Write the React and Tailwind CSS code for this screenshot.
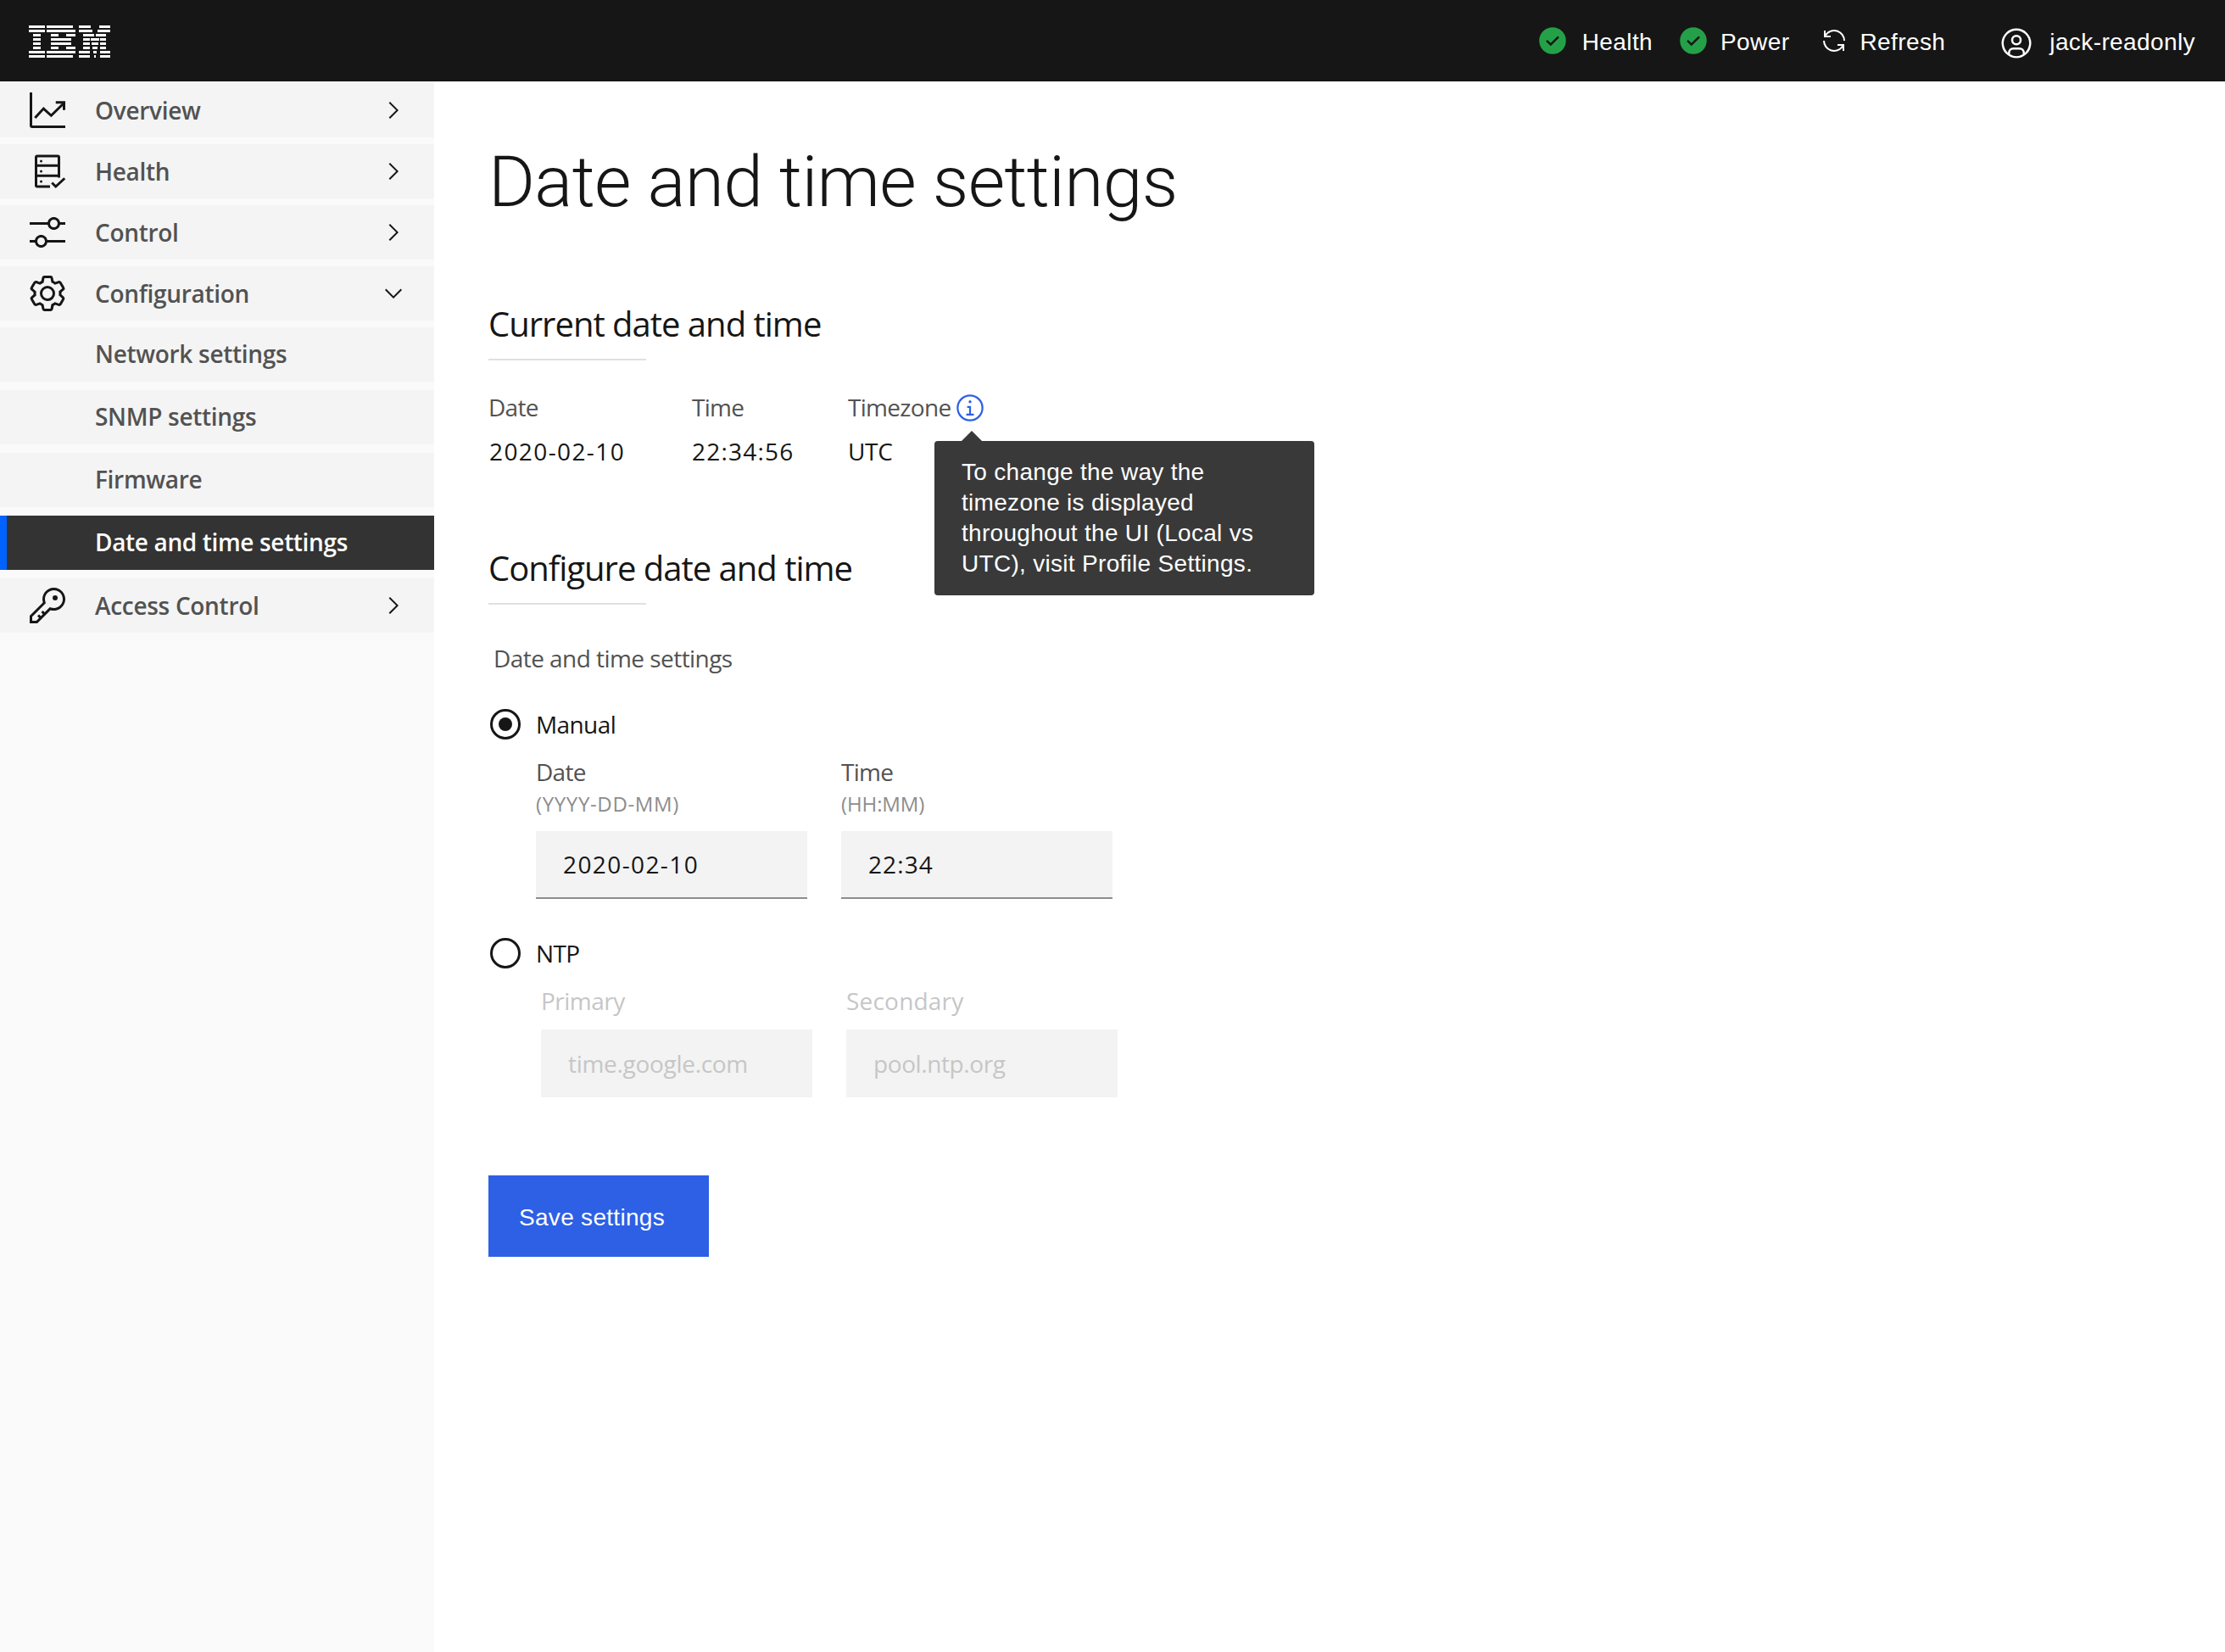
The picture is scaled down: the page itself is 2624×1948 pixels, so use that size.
import React from "react";

const logoRows = [
  [[0,19],[21,52],[59,73],[83,96]],
  [[0,19],[21,55],[59,75],[81,96]],
  [[5,14],[26,35],[44,55],[64,77],[79,91]],
  [[5,14],[26,50],[64,72],[73,83],[84,91]],
  [[5,14],[26,50],[64,72],[74,82],[84,91]],
  [[5,14],[26,35],[44,55],[64,72],[75,81],[84,91]],
  [[0,19],[21,55],[59,72],[76,80],[84,96]],
  [[0,19],[21,52],[59,72],[77,79],[84,96]],
];

function IbmLogo() {
  return (
    <svg width="96" height="38" viewBox="0 0 96 38" className="mt-[2px] block" fill="#ffffff" aria-label="IBM">
      {logoRows.map((spans, i) =>
        spans.map(([a, b], j) => <rect key={i + "-" + j} x={a} y={i * 5} width={b - a} height="3" />)
      )}
    </svg>
  );
}

function CheckFilled() {
  return (
    <svg width="36" height="36" viewBox="0 0 32 32" className="block shrink-0">
      <circle cx="16" cy="16" r="10" fill="#161616" />
      <path fill="#24a148" d="M16 2a14 14 0 1 0 14 14A14 14 0 0 0 16 2zm-2 19.59l-5-5L10.59 15 14 18.41 21.41 11l1.6 1.59z" />
    </svg>
  );
}

function Renew() {
  return (
    <svg width="32" height="32" viewBox="0 0 32 32" fill="#ffffff" className="block shrink-0">
      <path d="M12 10H6.78A11 11 0 0 1 27 16h2A13 13 0 0 0 6 7.68V4H4v8h8zM20 22h5.22A11 11 0 0 1 5 16H3a13 13 0 0 0 23 8.32V28h2v-8h-8z" />
    </svg>
  );
}

function UserAvatar() {
  return (
    <svg width="40" height="40" viewBox="0 0 32 32" fill="#ffffff" className="block shrink-0">
      <path d="M16 8a5 5 0 1 0 5 5 5 5 0 0 0-5-5zm0 8a3 3 0 1 1 3-3 3.003 3.003 0 0 1-3 3z" />
      <path d="M16 2a14 14 0 1 0 14 14A14.016 14.016 0 0 0 16 2zm-6 24.377V25a3.003 3.003 0 0 1 3-3h6a3.003 3.003 0 0 1 3 3v1.377a11.899 11.899 0 0 1-12 0zm13.993-1.451A5.002 5.002 0 0 0 19 20h-6a5.002 5.002 0 0 0-4.992 4.926 12 12 0 1 1 15.985 0z" />
    </svg>
  );
}

function ChartIcon() {
  return (
    <svg width="48" height="48" viewBox="0 0 32 32" fill="none" stroke="#161616" strokeWidth="2" className="block">
      <path d="M3 2v26a1 1 0 0 0 1 1h26" />
      <path d="M6.2 22l6.7-7.3 6 5.5L29.5 9.8" />
      <path d="M22.5 9.8H29v6" />
    </svg>
  );
}

function HealthIcon() {
  return (
    <svg width="48" height="48" viewBox="0 0 32 32" fill="none" stroke="#161616" strokeWidth="2" className="block">
      <path d="M18 28H8a1 1 0 0 1-1-1V5a1 1 0 0 1 1-1h16a1 1 0 0 1 1 1v16" />
      <path d="M7 11.5h18M7 19.5h18" />
      <circle cx="11" cy="8" r="1" fill="#161616" stroke="none" />
      <circle cx="11" cy="16" r="1" fill="#161616" stroke="none" />
      <circle cx="11" cy="24" r="1" fill="#161616" stroke="none" />
      <path d="M19.5 25l3 3 7-6.5" />
    </svg>
  );
}

function SlidersIcon() {
  return (
    <svg width="48" height="48" viewBox="0 0 32 32" fill="#161616" className="block">
      <path d="M30 8h-4.1c-.5-2.3-2.5-4-4.9-4s-4.4 1.7-4.9 4H2v2h14.1c.5 2.3 2.5 4 4.9 4s4.4-1.7 4.9-4H30V8zm-9 4c-1.7 0-3-1.3-3-3s1.3-3 3-3 3 1.3 3 3-1.3 3-3 3zM2 24h4.1c.5 2.3 2.5 4 4.9 4s4.4-1.7 4.9-4H30v-2H15.9c-.5-2.3-2.5-4-4.9-4s-4.4 1.7-4.9 4H2v2zm9-4c1.7 0 3 1.3 3 3s-1.3 3-3 3-3-1.3-3-3 1.3-3 3-3z" />
    </svg>
  );
}

function GearIcon() {
  return (
    <svg width="48" height="48" viewBox="0 0 32 32" fill="#161616" className="block">
      <path d="M27 16.76c0-.25 0-.5 0-.76s0-.51 0-.77l1.92-1.68A2 2 0 0 0 29.3 11L26.94 7a2 2 0 0 0-1.73-1 2 2 0 0 0-.64.1l-2.43.82a11.35 11.35 0 0 0-1.31-.75l-.51-2.52a2 2 0 0 0-2-1.61h-4.68a2 2 0 0 0-2 1.61l-.51 2.52a11.48 11.48 0 0 0-1.32.75l-2.38-.86A2 2 0 0 0 6.79 6a2 2 0 0 0-1.73 1L2.7 11a2 2 0 0 0 .41 2.51L5 15.24c0 .25 0 .5 0 .76s0 .51 0 .77l-1.92 1.68A2 2 0 0 0 2.7 21l2.36 4a2 2 0 0 0 1.73 1 2 2 0 0 0 .64-.1l2.43-.82a11.35 11.35 0 0 0 1.31.75l.51 2.52a2 2 0 0 0 2 1.61h4.72a2 2 0 0 0 2-1.61l.51-2.52a11.48 11.48 0 0 0 1.32-.75l2.42.82a2 2 0 0 0 .64.1 2 2 0 0 0 1.73-1l2.28-4a2 2 0 0 0-.41-2.51zM25.21 24l-3.43-1.16a8.86 8.86 0 0 1-2.71 1.57L18.36 28h-4.72l-.71-3.55a9.36 9.36 0 0 1-2.7-1.57L6.79 24l-2.36-4 2.72-2.4a8.9 8.9 0 0 1 0-3.13L4.43 12l2.36-4 3.43 1.16a8.86 8.86 0 0 1 2.71-1.57L13.64 4h4.72l.71 3.55a9.36 9.36 0 0 1 2.7 1.57L25.21 8l2.36 4-2.72 2.4a8.9 8.9 0 0 1 0 3.13L27.57 20z" />
      <path d="M16 22a6 6 0 1 1 6-6 5.94 5.94 0 0 1-6 6zm0-10a3.91 3.91 0 0 0-4 4 3.91 3.91 0 0 0 4 4 3.91 3.91 0 0 0 4-4 3.91 3.91 0 0 0-4-4z" />
    </svg>
  );
}

function KeyIcon() {
  return (
    <svg width="48" height="48" viewBox="0 0 32 32" fill="#161616" className="block">
      <path d="M21 2a8.998 8.998 0 0 0-8.612 11.612L2 24v6h6l10.388-10.388A9 9 0 1 0 21 2zm0 16a7.013 7.013 0 0 1-2.032-.302l-1.147-.348-.847.847-3.181 3.181L12.414 20 11 21.414l1.379 1.379-1.586 1.586L9.414 23 8 24.414l1.379 1.379L7.172 28H4v-3.172l9.802-9.802.848-.847-.348-1.147A7 7 0 1 1 21 18z" />
      <circle cx="22" cy="10" r="2" />
    </svg>
  );
}

function ChevronRight() {
  return (
    <svg width="32" height="32" viewBox="0 0 32 32" fill="#161616" className="block">
      <path d="M22 16L12 26l-1.4-1.4 8.6-8.6-8.6-8.6L12 6z" />
    </svg>
  );
}

function ChevronDown() {
  return (
    <svg width="32" height="32" viewBox="0 0 32 32" fill="#161616" className="block">
      <path d="M16 22L6 12l1.4-1.4 8.6 8.6 8.6-8.6L26 12z" />
    </svg>
  );
}

function InfoIcon() {
  return (
    <svg width="36" height="36" viewBox="0 0 32 32" fill="#2d60e5" className="block shrink-0">
      <path d="M17 22v-8h-4v2h2v6h-3v2h8v-2h-3z" />
      <path d="M16 8a1.5 1.5 0 1 0 1.5 1.5A1.5 1.5 0 0 0 16 8z" />
      <path d="M16 30a14 14 0 1 1 14-14 14 14 0 0 1-14 14zm0-26a12 12 0 1 0 12 12A12 12 0 0 0 16 4z" />
    </svg>
  );
}

function NavRow({ icon, label, chevron }) {
  return (
    <div className="mt-2 flex h-16 items-center bg-[#f4f4f4] first:mt-0">
      <div className="flex w-[112px] shrink-0 justify-start pl-8">{icon}</div>
      <span className="text-[28px] font-semibold tracking-[-0.3px] text-[#525252]">{label}</span>
      <div className="mr-8 ml-auto">{chevron}</div>
    </div>
  );
}

function SubRow({ label, active }) {
  return active ? (
    <div className="mt-[10px] flex h-16 items-center border-l-8 border-[#0062ff] bg-[#333333] pb-[3px] pl-[104px]">
      <span className="text-[28px] font-semibold tracking-[-0.35px] text-white">{label}</span>
    </div>
  ) : (
    <div className="mt-[10px] flex h-16 items-center bg-[#f4f4f4] pb-[3px] pl-[112px] first:mt-0">
      <span className="text-[28px] font-semibold tracking-[-0.3px] text-[#525252]">{label}</span>
    </div>
  );
}

function Radio({ checked, label }) {
  return (
    <div className="flex h-9 items-center">
      <span className="ml-[2px] flex h-9 w-9 shrink-0 items-center justify-center rounded-full border-[3px] border-[#161616]">
        {checked ? <span className="h-4 w-4 rounded-full bg-[#161616]" /> : null}
      </span>
      <span className="ml-[18px] text-[28px] leading-9 tracking-[-0.6px] text-[#161616]">{label}</span>
    </div>
  );
}

function Field({ label, hint, value, hintClass, valueClass }) {
  return (
    <div className="w-[320px]">
      <div className="text-[28px] leading-9 tracking-[-0.7px] text-[#525252]">{label}</div>
      <div className={"mt-1 text-[24px] leading-8 text-[#8d8d8d] " + hintClass}>{hint}</div>
      <input
        readOnly
        defaultValue={value}
        className={"mt-4 block h-20 w-full border-b-2 border-[#8d8d8d] bg-[#f3f3f3] px-8 text-[28px] text-[#161616] outline-none " + valueClass}
      />
    </div>
  );
}

function DisabledField({ label, placeholder, labelClass, inputClass }) {
  return (
    <div className="w-[320px]">
      <div className={"text-[28px] leading-9 text-[#c6c6c6] " + labelClass}>{label}</div>
      <input
        disabled
        placeholder={placeholder}
        className={"mt-4 block h-20 w-full bg-[#f3f3f3] px-8 text-[28px] outline-none placeholder:text-[#c6c6c6] " + inputClass}
      />
    </div>
  );
}

export default function App() {
  return (
    <div className="flex min-h-[1948px] flex-col bg-white font-['Open_Sans',sans-serif]">
      <header className="flex h-24 shrink-0 items-center bg-[#161616] pl-[34px] font-['Liberation_Sans',Arial,sans-serif] text-[28px] tracking-[0.4px] text-white">
        <IbmLogo />
        <div className="ml-auto flex items-center pr-[35px]">
          <CheckFilled />
          <span className="mt-1 ml-[17px]">Health</span>
          <span className="ml-[30px]"><CheckFilled /></span>
          <span className="mt-1 ml-[14px]">Power</span>
          <span className="ml-[37px]"><Renew /></span>
          <span className="mt-1 ml-[14px]">Refresh</span>
          <span className="mt-[6px] ml-[64px]"><UserAvatar /></span>
          <span className="mt-1 ml-[19px]">jack-readonly</span>
        </div>
      </header>
      <div className="flex flex-1">
        <aside className="w-[512px] shrink-0 bg-[#fafafa] pt-[2px]">
          <NavRow icon={<ChartIcon />} label="Overview" chevron={<ChevronRight />} />
          <NavRow icon={<HealthIcon />} label="Health" chevron={<ChevronRight />} />
          <NavRow icon={<SlidersIcon />} label="Control" chevron={<ChevronRight />} />
          <NavRow icon={<GearIcon />} label="Configuration" chevron={<ChevronDown />} />
          <div className="pt-2">
            <SubRow label="Network settings" />
            <SubRow label="SNMP settings" />
            <SubRow label="Firmware" />
            <SubRow label="Date and time settings" active />
          </div>
          <div className="mt-[10px]">
            <NavRow icon={<KeyIcon />} label="Access Control" chevron={<ChevronRight />} />
          </div>
        </aside>
        <main className="flex-1 pl-16">
          <h1 className="mt-[69px] font-['Roboto',sans-serif] text-[84px] leading-[100px] font-light tracking-[-0.7px] text-[#161616]">
            Date and time settings
          </h1>
          <h2 className="mt-[93px] text-[40px] leading-[48px] tracking-[-1px] text-[#161616]">Current date and time</h2>
          <div className="mt-[17px] h-[2px] w-[186px] bg-[#e0e0e0]" />
          <div className="mt-[37px] flex">
            <div className="w-[240px] shrink-0">
              <div className="text-[28px] leading-9 tracking-[-0.7px] text-[#525252]">Date</div>
              <div className="mt-4 pl-px text-[28px] leading-9 tracking-[1.4px] text-[#161616]">2020-02-10</div>
            </div>
            <div className="w-[184px] shrink-0">
              <div className="text-[28px] leading-9 tracking-[-0.7px] text-[#525252]">Time</div>
              <div className="mt-4 text-[28px] leading-9 tracking-[1.2px] text-[#161616]">22:34:56</div>
            </div>
            <div className="relative">
              <div className="flex h-9 items-center">
                <span className="text-[28px] leading-9 tracking-[-0.7px] text-[#525252]">Timezone</span>
                <span className="ml-[5px] pt-[2px]"><InfoIcon /></span>
              </div>
              <div className="mt-4 text-[28px] leading-9 tracking-[-0.3px] text-[#161616]">UTC</div>
              <div className="absolute top-[58px] left-[102px] w-[448px] rounded-[4px] bg-[#393939] px-8 py-[19px] font-['Liberation_Sans',Arial,sans-serif] text-[28px] leading-9 tracking-[0.3px] text-white">
                <span className="absolute -top-[12px] left-[32px] h-0 w-0 border-x-[12px] border-b-[12px] border-x-transparent border-b-[#393939]" />
                To change the way the timezone is displayed throughout the UI (Local vs UTC), visit Profile Settings.
              </div>
            </div>
          </div>
          <h2 className="mt-[96px] text-[40px] leading-[48px] tracking-[-1px] text-[#161616]">Configure date and time</h2>
          <div className="mt-[17px] h-[2px] w-[186px] bg-[#e0e0e0]" />
          <div className="mt-[45px] ml-[6px] text-[28px] leading-9 tracking-[-0.55px] text-[#525252]">Date and time settings</div>
          <div className="mt-[42px]"><Radio checked label="Manual" /></div>
          <div className="mt-[20px] ml-[56px] flex gap-[40px]">
            <Field label="Date" hint="(YYYY-DD-MM)" value="2020-02-10" hintClass="tracking-[0.65px]" valueClass="tracking-[1.4px]" />
            <Field label="Time" hint="(HH:MM)" value="22:34" hintClass="tracking-[-0.1px]" valueClass="tracking-[1.1px]" />
          </div>
          <div className="mt-[46px]"><Radio label="NTP" /></div>
          <div className="mt-[20px] ml-[62px] flex gap-[40px]">
            <DisabledField label="Primary" placeholder="time.google.com" labelClass="tracking-[-0.5px]" inputClass="tracking-[-0.3px]" />
            <DisabledField label="Secondary" placeholder="pool.ntp.org" labelClass="tracking-[0.2px]" inputClass="tracking-[-0.4px]" />
          </div>
          <button className="mt-[92px] block h-24 w-[260px] bg-[#2d60e5] pl-[36px] text-left font-['Liberation_Sans',Arial,sans-serif] text-[28px] tracking-[0.3px] text-white">
            <span className="relative top-[2px]">Save settings</span>
          </button>
        </main>
      </div>
    </div>
  );
}
